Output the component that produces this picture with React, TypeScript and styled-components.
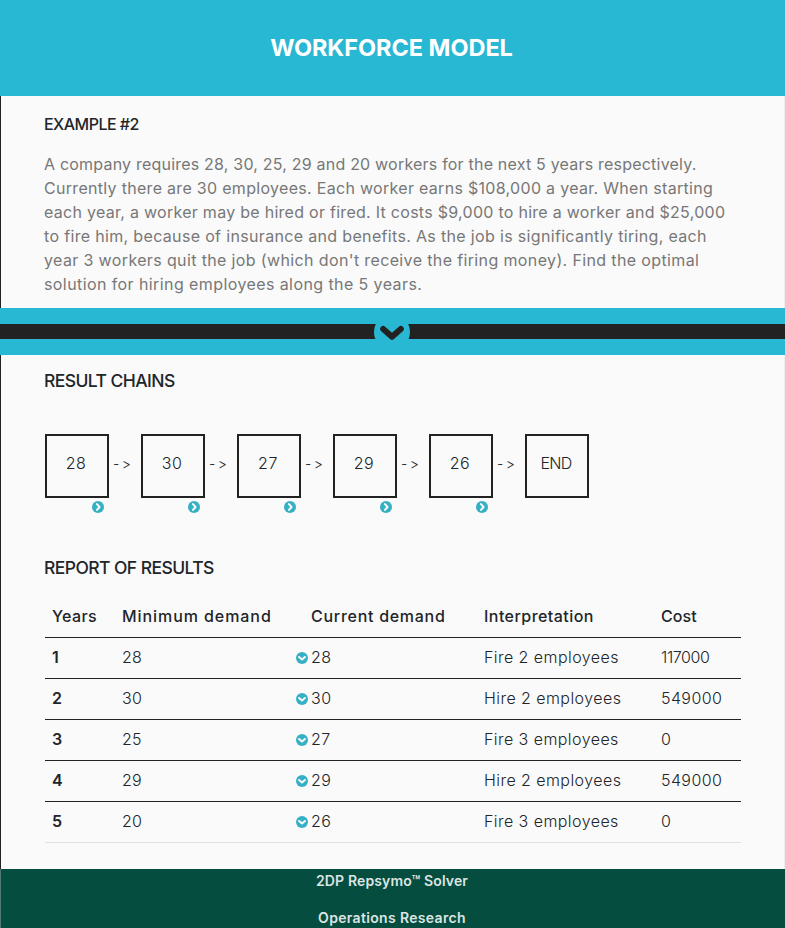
import React from 'react';
import styled, { createGlobalStyle } from 'styled-components';

const CYAN = '#28b8d3';
const INK = '#212529';
const DARK = '#222222';

const GlobalStyle = createGlobalStyle`
  *, *::before, *::after { box-sizing: border-box; }
  body {
    margin: 0;
    background: #fafafa;
    color: ${INK};
    font-family: Inter, "Open Sans", sans-serif;
    font-size: 16px;
    font-feature-settings: "calt" 0;
  }
`;

const Page = styled.main`
  width: 785px;
  height: 928px;
  overflow: hidden;
  display: flex;
  flex-direction: column;
`;

const Header = styled.header`
  height: 96px;
  flex: none;
  display: flex;
  align-items: center;
  justify-content: center;
  background: ${CYAN};
`;

const Title = styled.h1`
  margin: 0 2px 0 0;
  color: #fff;
  font-size: 23.5px;
  font-weight: 700;
  letter-spacing: -0.04px;
  line-height: 36px;
`;

const Panel = styled.section<{ $height: number; $top: number }>`
  flex: none;
  height: ${(p) => p.$height}px;
  padding: ${(p) => p.$top}px 43px 0 44px;
  border-left: 1px solid ${DARK};
  border-right: 1px solid #efefef;
  background: #fafafa;
`;

const Spaced = styled.span<{ $ls: number }>`
  letter-spacing: ${(p) => p.$ls}px;
`;

const ExampleHeading = styled.h2`
  margin: 0 0 16px -1px;
  font-size: 16px;
  font-weight: 500;
  line-height: 24px;
  letter-spacing: -0.53px;
`;

const Statement = styled.p`
  margin: 0 0 0 -1px;
  color: #777;
  line-height: 24px;
`;

const Line = styled(Spaced)`
  display: block;
  white-space: nowrap;
`;

const Divider = styled.div`
  flex: none;
  height: 47px;
  display: flex;
  align-items: center;
  justify-content: center;
  border: solid ${CYAN};
  border-width: 16px 0;
  background: ${DARK};
`;

const Toggle = styled.button`
  flex: none;
  display: flex;
  margin-right: 1px;
  padding: 0;
  border: 0;
  background: none;
`;

const SectionHeading = styled.h2`
  margin: 0 0 0 -1px;
  font-size: 17.5px;
  font-weight: 500;
  line-height: 24px;
  letter-spacing: -0.57px;
`;

const Chain = styled.div`
  display: flex;
  margin: 41px 0 43px;
`;

const ChainStep = styled.div`
  width: 64px;
  display: flex;
  flex-direction: column;
`;

const ChainBox = styled.div`
  height: 64px;
  padding: 0 2px 7px 0;
  display: flex;
  align-items: center;
  justify-content: center;
  border: 2px solid ${DARK};
  font-weight: 300;
`;

const NextMark = styled.span`
  height: 12px;
  margin: 3px 5px 0 0;
  display: flex;
  align-self: flex-end;
`;

const Arrow = styled.span`
  width: 32px;
  padding-left: 4px;
  font-size: 14px;
  font-weight: 300;
  letter-spacing: 2.5px;
  line-height: 59px;
`;

const Row = styled.div<{ $line: string }>`
  display: grid;
  grid-template-columns: 69px 182px 180px 177px 88px;
  height: 41px;
  align-items: center;
  padding-bottom: 2px;
  border-bottom: 1px solid ${(p) => p.$line};
`;

const Table = styled.div`
  width: 696px;
  margin-top: 17px;
`;

const Cell = styled.div<{ $weight?: number }>`
  padding-left: 8px;
  white-space: nowrap;
  font-weight: ${(p) => p.$weight ?? 300};

  &:first-child {
    padding-left: 7px;
  }
`;

const DemandCell = styled(Cell)`
  display: flex;
  align-items: center;
  gap: 3px;
  padding-left: 0;

  svg {
    margin-top: 2px;
  }
`;

const DemandHead = styled(Cell)`
  padding-left: 15px;
`;

const Footer = styled.footer`
  flex: 1;
  display: flex;
  flex-direction: column;
  align-items: center;
  padding-right: 2px;
  border-left: 1px solid #4e7a70;
  background: #044d3f;
  color: #dde5e3;
  font-size: 14px;
  font-weight: 600;
`;

const FooterLine = styled(Spaced)`
  height: 37px;
  line-height: 23px;
`;

const Turned = styled.svg<{ $turn: number }>`
  display: block;
  flex: none;
  transform: rotate(${(p) => p.$turn}deg);
`;

interface ChevronProps {
  size: number;
  fill: string;
  mark: string;
  turn?: number;
}

function ChevronCircle({ size, fill, mark, turn = 0 }: ChevronProps) {
  return (
    <Turned $turn={turn} width={size} height={size} viewBox="0 0 36 36" aria-hidden="true">
      <circle cx="18" cy="18" r="18" fill={fill} />
      <path
        d="M9.2 15 L18 22.7 L26.8 15"
        fill="none"
        stroke={mark}
        strokeWidth="6"
        strokeLinecap="round"
        strokeLinejoin="round"
      />
    </Turned>
  );
}

const statement: [string, number][] = [
  ['A company requires 28, 30, 25, 29 and 20 workers for the next 5 years respectively.', 0.205],
  ['Currently there are 30 employees. Each worker earns $108,000 a year. When starting', 0.302],
  ['each year, a worker may be hired or fired. It costs $9,000 to hire a worker and $25,000', 0.278],
  ['to fire him, because of insurance and benefits. As the job is significantly tiring, each', 0.335],
  ["year 3 workers quit the job (which don't receive the firing money). Find the optimal", 0.366],
  ['solution for hiring employees along the 5 years.', 0.41],
];

const chain = ['28', '30', '27', '29', '26'];

const results = [
  { minimum: '28', current: '28', action: 'Fire 2 employees', cost: '117000' },
  { minimum: '30', current: '30', action: 'Hire 2 employees', cost: '549000' },
  { minimum: '25', current: '27', action: 'Fire 3 employees', cost: '0' },
  { minimum: '29', current: '29', action: 'Hire 2 employees', cost: '549000' },
  { minimum: '20', current: '26', action: 'Fire 3 employees', cost: '0' },
];

export default function App() {
  return (
    <Page>
      <GlobalStyle />
      <Header>
        <Title>WORKFORCE MODEL</Title>
      </Header>

      <Panel $height={212} $top={16}>
        <ExampleHeading>EXAMPLE #2</ExampleHeading>
        <Statement>
          {statement.map(([text, ls]) => (
            <Line key={text} $ls={ls}>{text}</Line>
          ))}
        </Statement>
      </Panel>

      <Divider>
        <Toggle aria-label="Toggle statement">
          <ChevronCircle size={36} fill={CYAN} mark={DARK} />
        </Toggle>
      </Divider>

      <Panel $height={514} $top={14}>
        <SectionHeading>RESULT CHAINS</SectionHeading>
        <Chain>
          {chain.map((value) => (
            <React.Fragment key={value}>
              <ChainStep>
                <ChainBox><Spaced $ls={0.5}>{value}</Spaced></ChainBox>
                <NextMark>
                  <ChevronCircle size={12} fill="#35b0c4" mark="#fafafa" turn={-90} />
                </NextMark>
              </ChainStep>
              <Arrow>-&gt;</Arrow>
            </React.Fragment>
          ))}
          <ChainStep>
            <ChainBox><Spaced $ls={-0.8}>END</Spaced></ChainBox>
          </ChainStep>
        </Chain>

        <SectionHeading>REPORT OF RESULTS</SectionHeading>
        <Table>
          <Row $line={INK}>
            <Cell $weight={500}><Spaced $ls={0.36}>Years</Spaced></Cell>
            <Cell $weight={500}><Spaced $ls={0.93}>Minimum demand</Spaced></Cell>
            <DemandHead $weight={500}><Spaced $ls={0.72}>Current demand</Spaced></DemandHead>
            <Cell $weight={500}><Spaced $ls={0.45}>Interpretation</Spaced></Cell>
            <Cell $weight={500}><Spaced $ls={0.1}>Cost</Spaced></Cell>
          </Row>
          {results.map((r, i) => (
            <Row key={i} $line={i === results.length - 1 ? '#dee2e6' : INK}>
              <Cell $weight={600}>{i + 1}</Cell>
              <Cell><Spaced $ls={0.3}>{r.minimum}</Spaced></Cell>
              <DemandCell>
                <ChevronCircle size={12} fill="#35b0c4" mark="#fafafa" />
                <Spaced $ls={0.5}>{r.current}</Spaced>
              </DemandCell>
              <Cell><Spaced $ls={0.44}>{r.action}</Spaced></Cell>
              <Cell><Spaced $ls={r.cost === '117000' ? -0.41 : 0.4}>{r.cost}</Spaced></Cell>
            </Row>
          ))}
        </Table>
      </Panel>

      <Footer>
        <FooterLine $ls={0.13}>2DP Repsymo™ Solver</FooterLine>
        <FooterLine $ls={0.337}>Operations Research</FooterLine>
      </Footer>
    </Page>
  );
}
